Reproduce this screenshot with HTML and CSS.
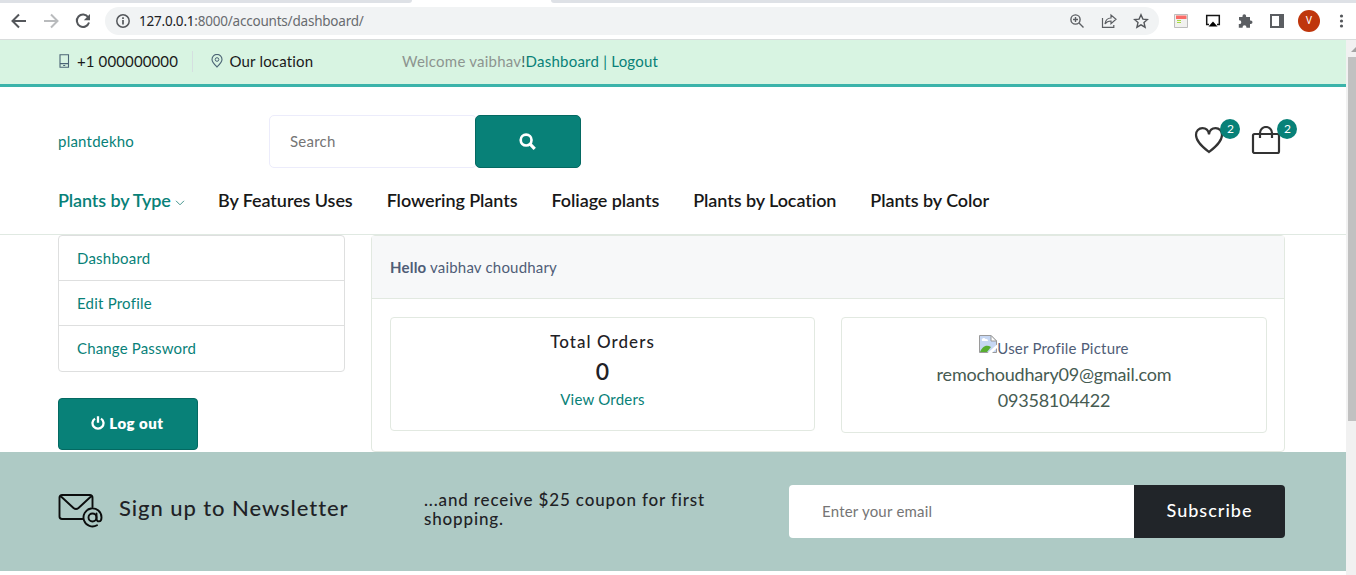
FILE: index.html
```html
<!DOCTYPE html>
<html lang="en">
<head>
<meta charset="utf-8">
<title>Dashboard</title>
<link rel="stylesheet" href="styles.css">
</head>
<body>
<div class="browser">
  <div class="tabstrip"><span class="tabs-left"></span><span class="tabs-right"></span></div>
  <div class="toolbar">
    <svg class="nav-icon" viewBox="0 0 16 16"><path d="M15 8H2M8 1.500 1.500 8 8 14.500" fill="none" stroke="#54575b" stroke-width="2"/></svg>
    <svg class="nav-icon" viewBox="0 0 16 16"><path d="M1 8h13M8 1.500 14.500 8 8 14.500" fill="none" stroke="#b9bbbd" stroke-width="2"/></svg>
    <svg class="nav-icon" viewBox="0 0 16 16"><path d="M13.200 4.300A6.200 6.200 0 1 0 14 9.500" fill="none" stroke="#54575b" stroke-width="2"/><path d="M15 1v6.200H8.800z" fill="#54575b"/></svg>
    <div class="address">
      <svg class="info" viewBox="0 0 14 14"><circle cx="7" cy="7" r="6.200" fill="none" stroke="#54575b" stroke-width="1.500"/><path d="M7 6v4.500M7 3.300v1.600" stroke="#54575b" stroke-width="1.700"/></svg>
      <span class="url"><b>127.0.0.1</b>:8000/accounts/dashboard/</span>
      <svg class="a-icon" viewBox="0 0 16 16"><g fill="none" stroke="#5b5e62" stroke-width="1.400"><circle cx="6.500" cy="6.500" r="4.600"/><path d="m10 10 4.500 4.500M4 6.500h5M6.500 4v5"/></g></svg>
      <svg class="a-icon" viewBox="0 0 16 16"><g fill="none" stroke="#5b5e62" stroke-width="1.200"><path d="M1.500 5v9.400h11.300V12"/><path d="M4 11c.5-4 3-6 6-6V2l5 4.300-5 4.300V8C7 8 5.500 8.800 4 11z"/></g></svg>
      <svg class="a-icon" viewBox="0 0 16 16"><path d="m8 1.800 1.900 4.300 4.600.4L11 9.600l1.100 4.600L8 11.800l-4.100 2.400L5 9.600 1.500 6.500l4.600-.4z" fill="none" stroke="#54575b" stroke-width="1.400"/></svg>
    </div>
    <div class="extensions">
      <svg viewBox="0 0 16 16"><path d="M1.500 1.500h13v13h-13z" fill="#f1f1ef" stroke="#bdbdbd"/><path d="M3 2.500h10.500v3.500H3z" fill="#fa6c68"/><path d="M4 7.500h4M4 9.500h4" stroke="#a7dc42"/></svg>
      <svg viewBox="0 0 16 16"><path d="M4 11.500H1.700v-9h12.600v9H12" fill="none" stroke="#151515" stroke-width="1.500"/><path d="m8 8.500 4.500 5h-9z" fill="#000"/></svg>
      <svg viewBox="0 0 16 16"><path d="M2 4h3.500V3a1.800 1.800 0 0 1 3.600 0v1H13v3.500h.7a1.800 1.800 0 0 1 0 3.600H13v3.700H9.400v-.7a1.900 1.900 0 0 0-3.800 0v.7H1.800v-3.700h.6a1.900 1.900 0 0 0 0-3.800H2z" fill="#5b5e62"/></svg>
      <svg viewBox="0 0 16 16"><path d="M2 2h12v12H2z" fill="none" stroke="#5b5e62" stroke-width="2"/><path d="M10 2h4v12h-4z" fill="#5b5e62"/></svg>
      <span class="avatar">V</span>
      <svg class="dots" viewBox="0 0 16 16"><g fill="#54575b"><circle cx="8.500" cy="3" r="1.600"/><circle cx="8.500" cy="8" r="1.600"/><circle cx="8.500" cy="13" r="1.600"/></g></svg>
    </div>
  </div>
</div>
<div class="viewport">
  <div class="page">
    <div class="topbar container">
      <svg class="phone" viewBox="0 0 12 14"><path d="M2 .7h8.500v12.600H2zM2 9.600h8.500M5.200 11.500h2" fill="none" stroke="#4b6475" stroke-width="1.100"/></svg>
      <span class="phone-no">+1 000000000</span>
      <span class="location">
        <svg viewBox="0 0 12 14"><path d="M6 13C3.500 10.400 1 8 1 5.400a5 5 0 0 1 10 0C11 8 8.500 10.400 6 13z" fill="none" stroke="#4b6475" stroke-width="1.100"/><circle cx="6" cy="5.500" r="1.800" fill="none" stroke="#4b6475"/></svg>
        <span>Our location</span>
      </span>
      <span class="welcome">Welcome vaibhav<span class="bang">!</span><a>Dashboard</a><a> | </a><a>Logout</a></span>
    </div>
    <header class="header container">
      <div class="header-row">
        <a class="brand">plantdekho</a>
        <div class="search">
          <div class="search-input">Search</div>
          <div class="search-btn"><svg viewBox="0 0 16 16"><circle cx="6.700" cy="6.700" r="5.100" fill="none" stroke="#fff" stroke-width="2.500"/><path d="m10.500 10.500 4.300 4.500" stroke="#fff" stroke-width="3"/></svg></div>
        </div>
        <div class="actions">
          <span class="action"><svg viewBox="0 0 30 28"><path d="M15 26C10 22 2 16 2 9 2 5 4.800 2.200 8.400 2.200c3.300 0 6 2.300 6.600 6 .6-3.700 3.300-6 6.600-6C25.200 2.200 28 5 28 9c0 7-8 13-13 17z" fill="none" stroke="#333" stroke-width="2.200"/></svg><i class="badge">2</i></span>
          <span class="action"><svg viewBox="0 0 30 28"><rect x="2" y="8" width="26" height="19" rx="1.500" fill="none" stroke="#333" stroke-width="2.200"/><path d="M9 12V7a6 6 0 0 1 12 0v5" fill="none" stroke="#333" stroke-width="2.200"/></svg><i class="badge">2</i></span>
        </div>
      </div>
      <nav class="nav">
        <a class="active"><span>Plants by Type</span><svg viewBox="0 0 10 6"><path d="m1 .8 4 4 4-4" fill="none" stroke="#46958e"/></svg></a>
        <a>By Features Uses</a><a>Flowering Plants</a><a>Foliage plants</a><a>Plants by Location</a><a>Plants by Color</a>
      </nav>
    </header>
    <main class="main container">
      <aside class="side">
        <div class="menu"><a>Dashboard</a><a>Edit Profile</a><a class="password">Change Password</a></div>
        <div class="logout"><svg viewBox="0 0 14 14"><path d="M4 2.600a5.500 5.500 0 1 0 6 0M7 .3v6.500" fill="none" stroke="#fff" stroke-width="2.300"/></svg><span>Log out</span></div>
      </aside>
      <section class="panel">
        <div class="panel-head"><b>Hello</b> vaibhav choudhary</div>
        <div class="cards">
          <div class="card orders">
            <h5>Total Orders</h5>
            <h4>0</h4>
            <a>View Orders</a>
          </div>
          <div class="card profile">
            <div class="picture"><svg viewBox="0 0 18 18"><path d="M.5.500H12L17.500 6v11.500H.5z" fill="#c6d7f3" stroke="#9a9a9a"/><path d="M12 .5V6h5.500z" fill="#fff" stroke="#9a9a9a"/><path d="M3 6a2 2 0 0 1 3.500-2A2 2 0 0 1 9 6z" fill="#fff"/><path d="M1 17c2-5 6-8 11-5l-4 5z" fill="#58ae31"/><path d="m8.500 18 9.500-8.500V13l-5 5z" fill="#fff"/></svg><span>User Profile Picture</span></div>
            <div class="contact email">remochoudhary09@gmail.com</div>
            <div class="contact number">09358104422</div>
          </div>
        </div>
      </section>
    </main>
    <section class="newsletter container">
      <svg class="mail" viewBox="0 0 44 34"><g fill="none" stroke="#0b0d0d" stroke-width="1.900" stroke-linecap="round" stroke-linejoin="round"><path d="M24 25H3.500A2.500 2.500 0 0 1 1 22.500V3.500A2.500 2.500 0 0 1 3.500 1h28A2.500 2.500 0 0 1 34 3.500V13M2 2l13 12q2.500 2 5 0L33 2"/><path d="M38.500 31.200a9 9 0 1 1 4.500-7.700c0 5-5 5-5 1v-5"/><circle cx="34" cy="23.500" r="4"/></g></svg>
      <h2>Sign up to Newsletter</h2>
      <h5 class="coupon">...and receive $25 coupon for first shopping.</h5>
      <div class="subscribe"><div class="email-input">Enter your email</div><div class="sub-btn">Subscribe</div></div>
    </section>
  </div>
  <div class="scrollbar"><svg viewBox="0 0 8 5"><path d="M0 5 5 0l3 3v2z" fill="#a3a3a3"/></svg><div class="thumb"></div></div>
</div>
</body>
</html>
```

FILE: styles.css
```css
* { box-sizing: border-box; }
body { margin: 0; background: #fff; font-family: Lato, sans-serif; font-size: 15px; line-height: 24px; letter-spacing: 0.22px; color: #4f5d77; overflow: hidden; }
svg { display: block; flex: none; }
h2, h4, h5 { margin: 0; font-weight: 500; color: #1f2226; }
a { color: #088178; }

.browser { height: 40px; border-bottom: 1px solid #d9dcdc; }
.tabstrip { display: flex; justify-content: space-between; height: 3px; }
.tabs-left { width: 412px; background: #dee1e6; border-bottom-right-radius: 6px; }
.tabs-right { width: 805px; background: #dee1e6; border-bottom-left-radius: 6px; }
.toolbar { display: flex; align-items: center; height: 36px; padding-left: 11px; }
.nav-icon { width: 16px; height: 16px; margin-right: 16px; }
.address { display: flex; align-items: center; width: 1054px; height: 28px; margin-left: -2px; padding: 0 10px 0 11px; border-radius: 14px; background: #f1f3f4; }
.info { width: 14px; height: 14px; }
.url { flex: 1; margin-left: 9px; font-family: "Noto Sans", sans-serif; font-size: 13.5px; letter-spacing: -0.21px; color: #686b6f; white-space: nowrap; }
.url b { font-weight: 400; color: #202124; }
.a-icon { width: 16px; height: 16px; margin-left: 16px; }
.extensions { display: flex; align-items: center; gap: 16px; margin-left: 14px; }
.extensions svg { width: 16px; height: 16px; }
.avatar { width: 22px; height: 22px; margin: 0 -3px; border-radius: 50%; background: #bf360c; color: #fff; font: 10px/22px Roboto, sans-serif; text-align: center; }

.viewport { display: flex; height: 535px; }
.page { width: 1346px; }
.container { padding-left: 58px; padding-right: 61px; }
.topbar { display: flex; align-items: center; height: 47px; padding-bottom: 2px; background: #d8f4e2; border-bottom: 3px solid #3bb3aa; color: #1a1a1a; white-space: nowrap; }
.phone { width: 12px; height: 14px; }
.phone-no { width: 115px; margin-left: 7px; letter-spacing: 0.12px; }
.location { display: flex; align-items: center; gap: 6.5px; width: 210px; height: 21px; border-left: 1px solid #d5dfe0; padding-left: 18px; letter-spacing: 0.17px; }
.location svg { width: 12px; height: 14px; }
.welcome { color: #8d9490; letter-spacing: 0.23px; }
.bang { color: #3a6058; }

.header { height: 148px; padding-top: 28px; border-bottom: 1px solid #e0e9e2; }
.header-row { display: flex; align-items: center; height: 53px; }
.brand { width: 211px; padding-bottom: 2px; }
.search { display: flex; }
.search-input { width: 208px; height: 53px; margin-right: -2px; padding-left: 20px; border: 1px solid #ececfb; border-radius: 5px; line-height: 50px; color: #757575; }
.search-btn { display: flex; align-items: center; justify-content: center; width: 106px; height: 53px; padding-right: 2px; border: 1px solid #046962; border-radius: 5px; background: #088178; }
.search-btn svg { width: 17px; height: 17px; }
.actions { display: flex; gap: 27px; margin-left: auto; margin-right: 4px; }
.action { position: relative; width: 30px; height: 28px; margin-top: -4px; }
.action svg { width: 30px; height: 28px; }
.badge { position: absolute; left: 26px; top: -7px; width: 20px; height: 20px; padding-left: 1px; border-radius: 50%; background: #088178; color: #fff; font: 12px/20px Lato, sans-serif; text-align: center; }
.nav { display: flex; gap: 34px; margin-top: 19px; font-size: 18px; font-weight: 600; line-height: 26px; letter-spacing: -0.08px; white-space: nowrap; }
.nav a { color: #181818; }
.nav .active { display: flex; align-items: center; gap: 4px; width: 126px; color: #088178; letter-spacing: -0.12px; }
.nav svg { width: 10px; height: 6px; margin-top: 5px; }

.main { display: flex; gap: 26px; height: 217px; }
.side { width: 287px; }
.menu { height: 137px; border: 1px solid #dedfdf; border-radius: 4px; }
.menu a { display: block; height: 45px; padding-left: 18px; line-height: 45px; border-bottom: 1px solid #dedfdf; }
.menu a:last-child { border: 0; }
.menu .password { letter-spacing: 0.16px; }
.logout { display: flex; align-items: center; justify-content: center; gap: 4px; width: 140px; height: 52px; margin-top: 26px; padding: 0 1px 2px 0; border: 1px solid #046962; border-radius: 4px; background: #088178; color: #fff; font-weight: 800; letter-spacing: 0.5px; }
.logout svg { width: 14px; height: 14px; }
.panel { width: 914px; height: 217px; border: 1px solid #e2e9e1; border-radius: 4px; }
.panel-head { height: 63px; padding-left: 18px; background: #f7f8f9; border-bottom: 1px solid #e2e9e1; line-height: 63px; letter-spacing: 0.19px; }
.cards { display: flex; gap: 26px; padding: 18px 17px 0 18px; }
.card { display: flex; flex-direction: column; align-items: center; flex: 1; border: 1px solid #e2e9e1; border-radius: 4px; white-space: nowrap; }
.orders { flex: 0 0 425px; height: 114px; padding-top: 12px; }
.orders h5 { font-size: 17px; line-height: 24px; letter-spacing: 1.05px; }
.orders h4 { padding-top: 1px; font-size: 23px; font-weight: 600; line-height: 32px; letter-spacing: 0; }
.profile { height: 116px; padding-top: 17px; }
.picture { display: flex; height: 26px; }
.picture svg { width: 18px; height: 18px; }
.picture span { line-height: 27px; }
.contact { font-size: 18px; line-height: 26px; letter-spacing: -0.2px; color: #465b52; }

.newsletter { display: flex; height: 119px; padding-top: 33px; background: #aecac5; }
.mail { width: 45px; height: 34px; margin-top: 9px; }
.newsletter h2 { width: 305px; margin-left: 16px; font-size: 22px; line-height: 46px; letter-spacing: 0.93px; white-space: nowrap; }
.coupon { width: 300px; margin-right: 65px; padding-top: 6px; font-size: 17px; line-height: 18.500px; letter-spacing: 0.85px; }
.subscribe { display: flex; height: 53px; border-radius: 4px; overflow: hidden; }
.email-input { width: 345px; padding-left: 33px; background: #fff; line-height: 53px; color: #757575; }
.sub-btn { width: 151px; background: #212529; color: #fff; font-size: 18px; font-weight: 500; line-height: 50px; letter-spacing: 1px; text-align: center; }
.scrollbar { width: 10px; height: 535px; padding-left: 2px; background: #f1f1f1; }
.scrollbar svg { width: 8px; height: 5px; margin: 7px 0 0 3px; }
.thumb { height: 364px; margin-top: 5px; background: #c1c1c1; }
```
